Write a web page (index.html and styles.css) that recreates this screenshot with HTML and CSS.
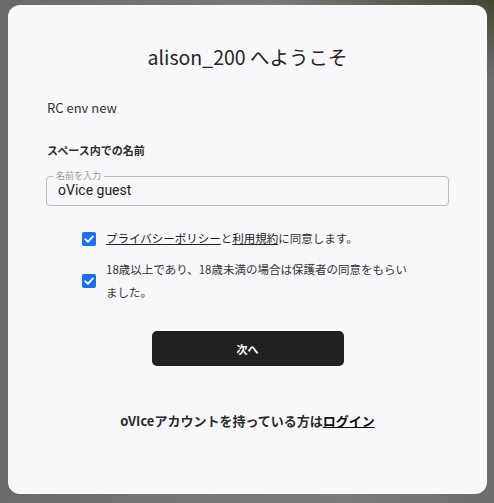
FILE: index.html
```html
<!DOCTYPE html>
<html lang="ja">
<head>
    <meta charset="UTF-8">
    <meta name="viewport" content="width=device-width, initial-scale=1.0">
    <title>oVice</title>
    <link rel="stylesheet" href="styles.css">
</head>
<body>
<div class="backdrop">
    <div class="card">
        <h1 class="title">alison_200 へようこそ</h1>
        <p class="space-name">RC env new</p>

        <p class="field-title">スペース内での名前</p>
        <fieldset class="name-field">
            <legend>名前を入力</legend>
            <input type="text" class="name-input" value="oVice guest">
        </fieldset>

        <div class="agree-list">
            <label class="agree">
                <span class="check">
                    <svg viewBox="0 0 14 14" width="14" height="14"><path d="M3.2 7.2 L5.9 9.8 L10.9 4.4" fill="none" stroke="#fff" stroke-width="1.8" stroke-linecap="round" stroke-linejoin="round"/></svg>
                </span>
                <span class="agree-text"><a href="#">プライバシーポリシー</a>と<a href="#">利用規約</a>に同意します。</span>
            </label>
            <label class="agree">
                <span class="check">
                    <svg viewBox="0 0 14 14" width="14" height="14"><path d="M3.2 7.2 L5.9 9.8 L10.9 4.4" fill="none" stroke="#fff" stroke-width="1.8" stroke-linecap="round" stroke-linejoin="round"/></svg>
                </span>
                <span class="agree-text">18歳以上であり、18歳未満の場合は保護者の同意をもらいました。</span>
            </label>
        </div>

        <div class="actions">
            <button class="next-btn">次へ</button>
        </div>

        <p class="login">oVIceアカウントを持っている方は<a href="#">ログイン</a></p>
    </div>
</div>
</body>
</html>
```

FILE: styles.css
```css
/* General Reset */
body {
    margin: 0;
    padding: 0;
    font-family: "Noto Sans CJK JP", "Noto Sans", sans-serif;
    color: #2b2b2b;
}

/* dimmed room picture behind the dialog */
.backdrop {
    height: 503px;
    box-sizing: border-box;
    padding: 5px 7px 9px 8px;
    background:
        linear-gradient(200deg, rgba(60, 70, 40, 0.9) 0%, rgba(60, 70, 40, 0) 12%),
        linear-gradient(90deg, #6a6a6a 0%, #777 40%, #7b7b7b 70%, #6d6d6d 100%);
}

/* Dialog card */
.card {
    height: 100%;
    box-sizing: border-box;
    background: #f8f8fa;
    border-radius: 12px;
    padding: 38px 38px 0 38px;
}

.title {
    margin: 0;
    text-align: center;
    font-size: 19.5px;
    font-weight: 400;
    line-height: 28px;
    color: #262626;
}

.space-name {
    margin: 27px 0 0 1px;
    font-size: 13px;
    line-height: 20px;
    color: #333;
}

.field-title {
    margin: 24px 0 0 1px;
    font-size: 11px;
    font-weight: 700;
    line-height: 16px;
}

/* outlined input */
.name-field {
    margin: 13px 0 0 0;
    padding: 0 11px;
    height: 35px;
    box-sizing: border-box;
    border: 1px solid #bdbdbd;
    border-radius: 4px;
}

.name-field legend {
    padding: 0 3px;
    margin-left: -5px;
    font-size: 9px;
    line-height: 10px;
    color: #9a9a9a;
}

.name-input {
    display: block;
    width: 100%;
    border: none;
    background: transparent;
    padding: 0;
    margin-top: -1px;
    font-family: Roboto, "Liberation Sans", sans-serif;
    font-size: 14px;
    line-height: 20px;
    color: #222;
    outline: none;
}

/* agreements */
.agree-list {
    margin: 21px 0 0 36px;
    display: flex;
    flex-direction: column;
    gap: 8px;
}

.agree {
    display: flex;
    align-items: center;
    gap: 10px;
    font-size: 11.5px;
    line-height: 23px;
    color: #333;
}

.check {
    flex: 0 0 14px;
    width: 14px;
    height: 14px;
    border-radius: 2px;
    background: #1c6ef2;
    display: flex;
}

.agree-text {
    max-width: 310px;
}

.agree-text a {
    color: #222;
    text-decoration: underline;
}

/* next button */
.actions {
    display: flex;
    justify-content: center;
    margin-top: 27px;
}

.next-btn {
    width: 192px;
    height: 35px;
    border: none;
    border-radius: 5px;
    background: #212121;
    color: #fff;
    font-family: inherit;
    font-size: 11px;
    font-weight: 700;
    cursor: pointer;
}

.login {
    margin: 45px 0 0 0;
    text-align: center;
    font-size: 13px;
    font-weight: 700;
    line-height: 20px;
    color: #2b2b2b;
}

.login a {
    color: #111;
    text-decoration: underline;
}
```
